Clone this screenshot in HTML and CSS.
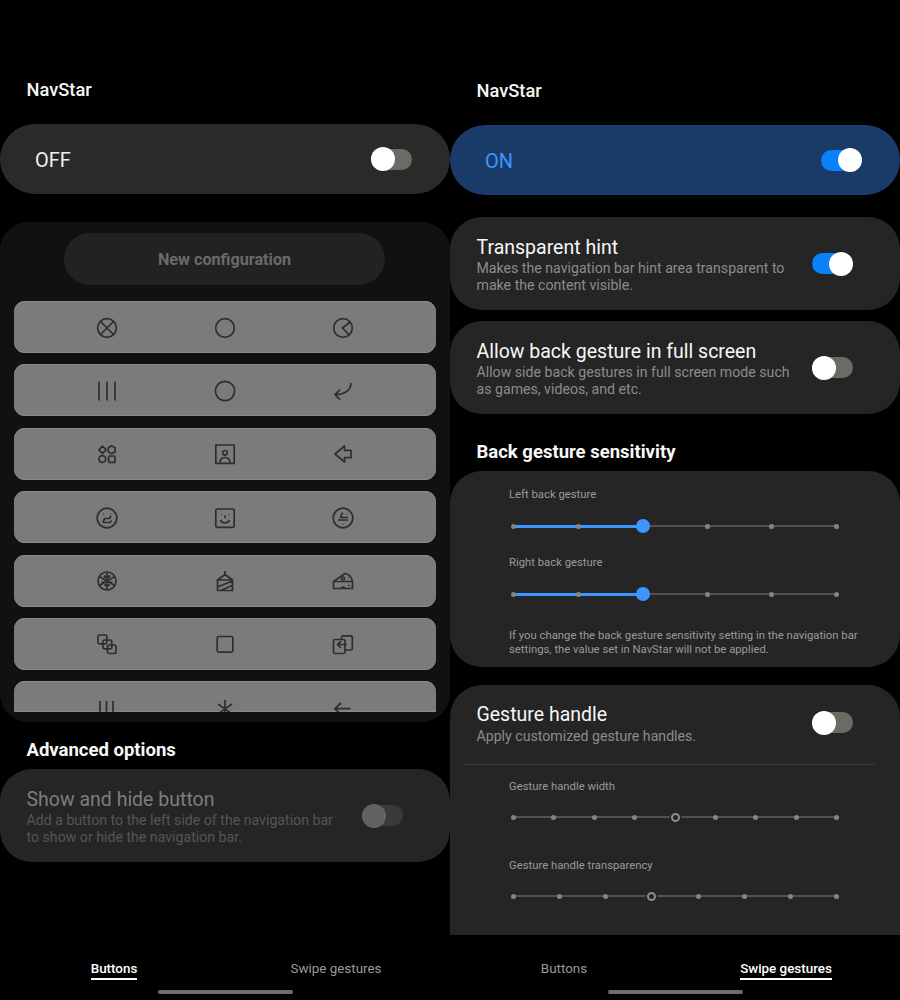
FILE: index.html
```html
<!DOCTYPE html>
<html lang="en">
<head>
  <meta charset="UTF-8" />
  <title>NavStar</title>
  <link rel="stylesheet" href="styles.css">
</head>
<body>
  <div class="screens">

    <!-- Buttons tab -->
    <div class="pane pane-left">
      <div class="app-title">NavStar</div>
      <div class="master">
        <span>OFF</span>
        <div class="switch"><div class="knob"></div></div>
      </div>

      <div class="config">
        <div class="new-config">New configuration</div>
        <div class="config-list">
          <div class="config-row">
            <svg class="ico" viewBox="0 0 24 24"><circle cx="12" cy="12" r="9.3"/><path d="M5.500 5.500l13 13M18.500 5.500l-13 13"/></svg>
            <svg class="ico" viewBox="0 0 24 24"><circle cx="12" cy="12" r="9.300"/></svg>
            <svg class="ico" viewBox="0 0 24 24"><circle cx="12" cy="12" r="9.300"/><path d="M19 6l-7.500 6 6.500 7"/></svg>
          </div>
          <div class="config-row">
            <svg class="ico" viewBox="0 0 24 24"><path d="M4 2.500v19M12 2.500v19M20 2.500v19"/></svg>
            <svg class="ico" viewBox="0 0 24 24"><circle cx="12" cy="12" r="9.600"/></svg>
            <svg class="ico" viewBox="0 0 24 24"><path d="M20 4c0 7-6 11.500-16 11.600M9 10.600l-5 5 5 5"/></svg>
          </div>
          <div class="config-row">
            <svg class="ico" viewBox="0 0 24 24"><path d="M7.500 4.200l3.600 3.600-3.600 3.600-3.600-3.600z"/><path d="M16.700 3.800l3.400 2v4l-3.400 2-3.400-2v-4z"/><circle cx="7.300" cy="17" r="3.400"/><rect x="13.600" y="14" width="6.400" height="6.400" rx="1"/></svg>
            <svg class="ico" viewBox="0 0 24 24"><rect x="2.800" y="3" width="18.400" height="18.400"/><circle cx="12" cy="10.800" r="2.300"/><path d="M7 21c0-3.500 2-5.500 5-5.500s5 2 5 5.500"/></svg>
            <svg class="ico" viewBox="0 0 24 24"><path d="M4 12l9.500-8v4.300h6.500v7.400h-6.500V20z"/></svg>
          </div>
          <div class="config-row">
            <svg class="ico" viewBox="0 0 24 24"><circle cx="12" cy="12" r="9.800"/><path d="M8 8h.8M15.500 8h.8M9.500 12.500h5l1.500-2.500M8 16.500h7l1.500-2M9.500 12.500L8 16.500"/></svg>
            <svg class="ico" viewBox="0 0 24 24"><rect x="2.800" y="3" width="18.400" height="18.400" rx="1.500"/><path d="M8 8.500h.8M15.500 8.500h.8M12 9.500v2.500M7.500 14c1.500 4 7.500 4 9 0"/></svg>
            <svg class="ico" viewBox="0 0 24 24"><circle cx="12" cy="12" r="9.800"/><path d="M11.500 6.500L9.500 11.500h7.500M7 14h10M16 8h.8M11.500 18h.8"/></svg>
          </div>
          <div class="config-row">
            <svg class="ico" viewBox="0 0 24 24"><circle cx="12" cy="12" r="9"/><path d="M12 3v18M4.200 7.500l15.600 9M19.800 7.500l-15.600 9"/><path class="thick" d="M9 6.500l2 2.500M15 6.500l-2 2.500M6.500 13.500h3M17.500 13.500h-3M10 17l1-2M14 17l-1-2"/></svg>
            <svg class="ico" viewBox="0 0 24 24"><path d="M12 2v4M4.500 21.500V11L12 5.500l7.500 5.500v10.500zM4.500 11h15M4.500 18l15-6M7.500 21.500l12-5"/></svg>
            <svg class="ico" viewBox="0 0 24 24"><path d="M2.500 12.500L14 4.500c4 .5 6.500 3.500 7.500 8v7h-19zM2.500 12.500h19M10 19.500c.5-2 3.500-2 4 0M17 16.500h1.500"/><circle cx="12" cy="9.500" r="1.500"/><path d="M17 8.500h.8"/></svg>
          </div>
          <div class="config-row">
            <svg class="ico" viewBox="0 0 24 24"><rect x="3" y="3" width="8.800" height="8.800" rx="1.500"/><rect x="8" y="8" width="8.800" height="8.800" rx="1.500"/><rect x="12.500" y="13" width="8.500" height="8.500" rx="1.500"/></svg>
            <svg class="ico" viewBox="0 0 24 24"><rect x="4.200" y="4.500" width="15.600" height="15.600" rx="1.500"/></svg>
            <svg class="ico" viewBox="0 0 24 24"><rect x="2.500" y="7.500" width="11.500" height="14" rx="1.500"/><path d="M10.500 7.500V5.200c0-.8.600-1.400 1.400-1.400h8c.8 0 1.400.600 1.400 1.400v11.400c0 .8-.600 1.400-1.400 1.400H14M16 12.500H6.500M10 9l-3.500 3.500L10 16"/></svg>
          </div>
          <div class="config-row row-cut">
            <svg class="ico" viewBox="0 0 24 24"><path d="M5 5v14M11.500 5v14M18 5v14"/></svg>
            <svg class="ico" viewBox="0 0 24 24"><path d="M12 4v20M5 8l14 10M19 8L5 18"/></svg>
            <svg class="ico" viewBox="0 0 24 24"><path d="M19.500 12.700H3.800M10 7l-6.200 5.700L10 18.500"/></svg>
          </div>
        </div>
      </div>

      <div class="section-title adv-title">Advanced options</div>
      <div class="card card-off">
        <div class="card-text">
          <div class="card-name">Show and hide button</div>
          <div class="card-desc">Add a button to the left side of the navigation bar to show or hide the navigation bar.</div>
        </div>
        <div class="switch"><div class="knob"></div></div>
      </div>

      <div class="tabs">
        <div class="tab active"><span>Buttons</span></div>
        <div class="tab"><span>Swipe gestures</span></div>
      </div>
      <div class="home-bar"></div>
    </div>

    <!-- Swipe gestures tab -->
    <div class="pane pane-right">
      <div class="app-title">NavStar</div>
      <div class="master master-on">
        <span>ON</span>
        <div class="switch on"><div class="knob"></div></div>
      </div>

      <div class="card hint-card">
        <div class="card-text">
          <div class="card-name">Transparent hint</div>
          <div class="card-desc">Makes the navigation bar hint area transparent to make the content visible.</div>
        </div>
        <div class="switch on"><div class="knob"></div></div>
      </div>
      <div class="card back-card">
        <div class="card-text">
          <div class="card-name">Allow back gesture in full screen</div>
          <div class="card-desc">Allow side back gestures in full screen mode such as games, videos, and etc.</div>
        </div>
        <div class="switch"><div class="knob"></div></div>
      </div>

      <div class="section-title sens-title">Back gesture sensitivity</div>
      <div class="sens-card">
        <div class="small-label">Left back gesture</div>
        <div class="slider">
          <div class="fill" style="width: 129px"></div>
          <i class="stop"></i><i class="stop"></i><i class="stop thumb"></i><i class="stop"></i><i class="stop"></i><i class="stop"></i>
        </div>
        <div class="small-label label-2">Right back gesture</div>
        <div class="slider">
          <div class="fill" style="width: 129px"></div>
          <i class="stop"></i><i class="stop"></i><i class="stop thumb"></i><i class="stop"></i><i class="stop"></i><i class="stop"></i>
        </div>
        <div class="note">If you change the back gesture sensitivity setting in the navigation bar settings, the value set in NavStar will not be applied.</div>
      </div>

      <div class="handle-card">
        <div class="handle-head">
          <div class="card-text">
            <div class="card-name">Gesture handle</div>
            <div class="card-desc">Apply customized gesture handles.</div>
          </div>
          <div class="switch"><div class="knob"></div></div>
        </div>
        <div class="divider"></div>
        <div class="handle-body">
          <div class="small-label">Gesture handle width</div>
          <div class="slider">
            <i class="stop"></i><i class="stop"></i><i class="stop"></i><i class="stop"></i><i class="stop ring"></i><i class="stop"></i><i class="stop"></i><i class="stop"></i><i class="stop"></i>
          </div>
          <div class="small-label label-3">Gesture handle transparency</div>
          <div class="slider">
            <i class="stop"></i><i class="stop"></i><i class="stop"></i><i class="stop ring"></i><i class="stop"></i><i class="stop"></i><i class="stop"></i><i class="stop"></i>
          </div>
        </div>
      </div>

      <div class="tabs">
        <div class="tab"><span>Buttons</span></div>
        <div class="tab active"><span>Swipe gestures</span></div>
      </div>
      <div class="home-bar"></div>
    </div>

  </div>
</body>
</html>
```

FILE: styles.css
```css
body {
  margin: 0;
  background: #000;
  color: #fff;
  font-family: Roboto, "Noto Sans", sans-serif;
}
.screens {
  display: flex;
  width: 900px;
  height: 1000px;
  overflow: hidden;
}
.pane {
  display: flex;
  flex-direction: column;
  width: 450px;
  height: 1000px;
}
.pane-left { padding-top: 80px; box-sizing: border-box; }
.pane-right { padding-top: 81px; box-sizing: border-box; }

.app-title {
  margin-left: 26.500px;
  font-size: 18.300px;
  font-weight: 500;
  line-height: 20px;
  color: #f5f5f5;
}
.master {
  display: flex;
  align-items: center;
  justify-content: space-between;
  height: 70px;
  margin-top: 24px;
  padding: 0 38px 0 35px;
  background: #2a2a2a;
  border-radius: 35px;
  font-size: 20px;
  color: #f0f0f0;
}
.master span { padding-top: 2px; }
.master-on {
  background: #1a3b68;
  color: #3d96ff;
}

/* toggles */
.switch {
  display: flex;
  align-items: center;
  flex: none;
  width: 41px;
  height: 21px;
  background: #6b6b63;
  border-radius: 11px;
}
.switch.on {
  justify-content: flex-end;
  background: #0a80fb;
}
.knob {
  flex: none;
  width: 24px;
  height: 24px;
  background: #fff;
  border-radius: 50%;
}
.card-off .switch { background: #3a3a3a; }
.card-off .knob { background: #626262; }

/* configuration list */
.config {
  height: 500px;
  box-sizing: border-box;
  margin-top: 28px;
  padding-top: 11px;
  background: #111;
  border-radius: 28px;
}
.new-config {
  width: 321px;
  height: 52px;
  margin: 0 0 0 64px;
  background: #222;
  border-radius: 26px;
  font-size: 16.200px;
  font-weight: 700;
  line-height: 54px;
  text-align: center;
  color: #6a6a6a;
}
.config-list {
  display: flex;
  flex-direction: column;
  gap: 11.400px;
  margin: 16px 14px 0;
}
.config-row {
  display: grid;
  grid-template-columns: repeat(3, 118px);
  justify-content: center;
  justify-items: center;
  flex: none;
  height: 52px;
  box-sizing: border-box;
  padding-top: 14.500px;
  overflow: hidden;
  background: #7b7b7b;
  border-radius: 11px;
  box-shadow: inset 0 1px #888, inset 0 -1px #888;
}
.row-cut {
  height: 31px;
  border-radius: 11px 11px 0 0;
}
.ico {
  width: 24px;
  height: 24px;
  fill: none;
  stroke: #2e2e2e;
  stroke-width: 1.700;
  stroke-linejoin: round;
}
.ico .thick { stroke-width: 2.200; }

.section-title {
  margin-left: 26.500px;
  font-size: 18.500px;
  font-weight: 700;
  line-height: 22px;
  color: #f8f8f8;
}
.adv-title { margin-top: 17px; }
.sens-title { margin-top: 27px; }

/* setting cards */
.card {
  display: flex;
  align-items: center;
  justify-content: space-between;
  height: 93px;
  box-sizing: border-box;
  padding: 0 47px 0 26.500px;
  background: #252525;
  border-radius: 32px;
}
.card-text { width: 322px; }
.card-off .card-text { width: 310px; }
.card .card-text { margin-top: 1px; }
.card-name {
  margin-bottom: -2px;
  font-size: 19.500px;
  line-height: 28px;
  color: #f7f7f7;
}
.card-desc {
  font-size: 14.150px;
  line-height: 17px;
  color: #8c8c8c;
}
.card-off { margin-top: 8px; }
.card-off .card-name { color: #7d7d7d; }
.card-off .card-desc { color: #555; }
.hint-card { margin-top: 22px; }
.back-card { margin-top: 11px; }

.sens-card {
  height: 196px;
  box-sizing: border-box;
  margin-top: 8px;
  padding: 17px 0 0 59px;
  background: #252525;
  border-radius: 32px;
}
.small-label {
  font-size: 11.300px;
  line-height: 14px;
  color: #9a9a9a;
}
.label-2 { margin-top: 23px; }
.label-3 { margin-top: 35px; }
.note {
  width: 385px;
  margin-top: 28px;
  font-size: 11.300px;
  line-height: 13.500px;
  color: #9a9a9a;
}

/* sliders */
.slider {
  position: relative;
  display: flex;
  justify-content: space-between;
  width: 337px;
  height: 14px;
  margin: 17px 0 0 -2.500px;
}
.slider::before {
  content: "";
  position: absolute;
  left: 7px;
  right: 7px;
  top: 6px;
  height: 2px;
  background: #525252;
}
.fill {
  position: absolute;
  left: 7px;
  top: 5.500px;
  height: 3px;
  background: #3d96ff;
}
.stop {
  position: relative;
  display: flex;
  align-items: center;
  justify-content: center;
  width: 14px;
  height: 14px;
}
.stop::after {
  content: "";
  width: 5px;
  height: 5px;
  background: #858585;
  border-radius: 50%;
}
.stop.thumb::after {
  width: 14px;
  height: 14px;
  background: #3d96ff;
}
.stop.ring::after {
  width: 5px;
  height: 5px;
  background: #252525;
  border: 2.500px solid #8c8c8c;
  box-shadow: 0 0 0 1.500px #252525;
}

.handle-card {
  height: 250px;
  box-sizing: border-box;
  margin-top: 18px;
  background: #252525;
  border-radius: 32px 32px 0 0;
}
.handle-head {
  display: flex;
  align-items: flex-start;
  justify-content: space-between;
  height: 79px;
  box-sizing: border-box;
  padding: 16px 47px 0 26.500px;
}
.handle-head .card-desc { margin-top: 1px; }
.handle-head .switch { margin-top: 11px; }
.divider {
  height: 1px;
  margin: 0 25px 0 15px;
  background: #3c3c3c;
}
.handle-body { padding: 15px 0 0 59px; }
.handle-body .slider { margin-top: 16px; }

/* bottom tabs */
.tabs {
  display: grid;
  grid-template-columns: 222px 222px;
  padding-left: 3px;
  margin-top: auto;
  font-size: 13.400px;
  line-height: 16px;
  text-align: center;
  color: #9a9a9a;
}
.tab span {
  display: inline-block;
  padding-bottom: 1px;
  border-bottom: 2px solid transparent;
}
.tab.active span {
  font-weight: 500;
  color: #fff;
  border-bottom-color: #fff;
}
.home-bar {
  width: 135px;
  height: 4px;
  margin: 10px auto 6px;
  background: #6e6e6e;
  border-radius: 2px;
}
```
